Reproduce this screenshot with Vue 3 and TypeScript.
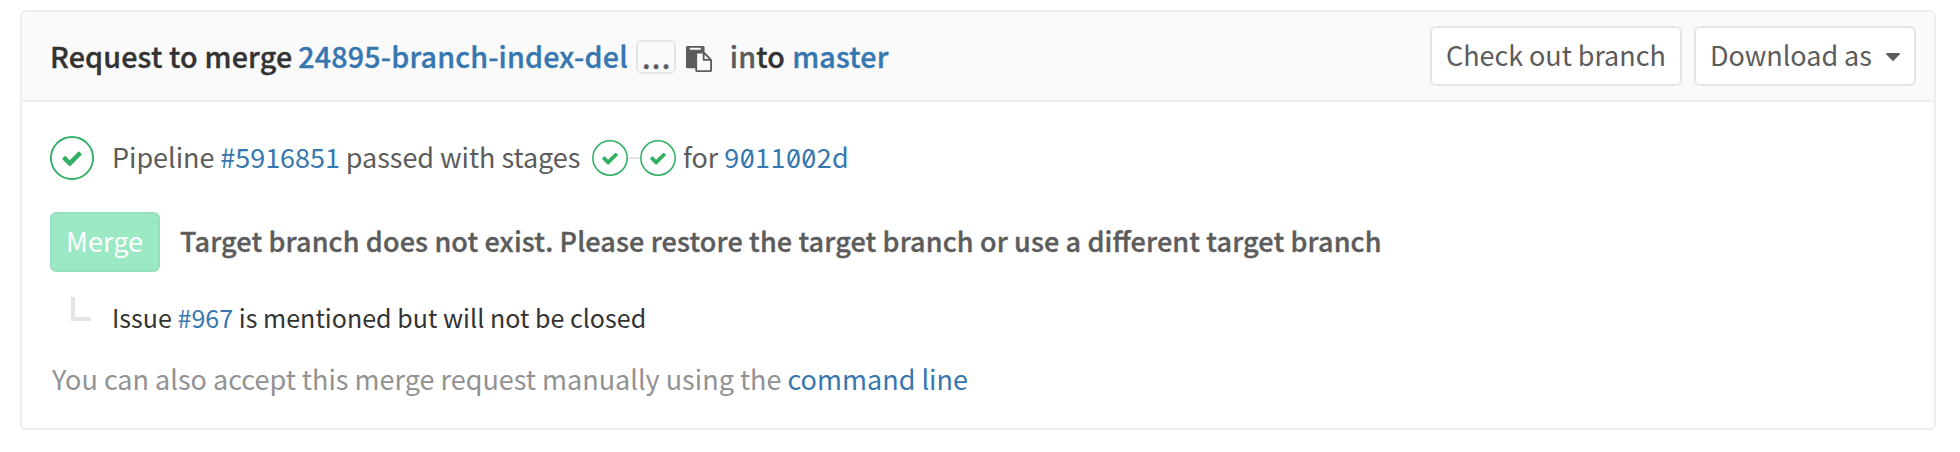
<script setup lang="ts">
const sourceBranch = '24895-branch-index-del'
const targetBranch = 'master'
const pipelineId = 5916851
const commit = [...'9011002d']
const stages = ['build', 'test']
const issueId = 967
const checkPath =
  'M6.278 7.697L5.045 6.464a.296.296 0 0 0-.42-.002l-.613.614a.298.298 0 0 0 .002.42l1.91 1.909a.5.5 0 0 0 .703.005l.265-.265L9.997 6.04a.291.291 0 0 0-.009-.408l-.614-.614a.29.29 0 0 0-.408-.009L6.278 7.697z'
</script>

<template>
  <section class="widget">
    <header class="head">
      <div class="title">
        <span class="lead">Request to merge</span>
        <a class="link source">{{ sourceBranch }}</a>
        <button class="expander" type="button">...</button>
        <svg class="paste" viewBox="0 0 1792 1792">
          <path
            d="M768 1664h896v-640h-416q-40 0-68-28t-28-68v-416h-384v1152zm256-1440v-64q0-13-9.5-22.5t-22.5-9.5h-704q-13 0-22.5 9.5t-9.5 22.5v64q0 13 9.5 22.5t22.5 9.5h704q13 0 22.5-9.5t9.5-22.5zm256 672h299l-299-299v299zm512 128v672q0 40-28 68t-68 28h-960q-40 0-68-28t-28-68v-160h-544q-40 0-68-28t-28-68v-1344q0-40 28-68t68-28h1088q40 0 68 28t28 68v328q21 13 36 28l408 408q28 28 48 76t20 88z"
          />
        </svg>
        <span class="into"><span class="soft">in</span>to</span>
        <a class="link">{{ targetBranch }}</a>
      </div>
      <div class="actions">
        <button class="btn checkout" type="button">Check out branch</button>
        <button class="btn download" type="button">
          Download as
          <svg class="caret" viewBox="0 0 14 8"><path d="M1 0h12q1.4.3.6 1.4L7.8 7.5q-.8.8-1.6 0L.4 1.4Q-.4.3 1 0z" /></svg>
        </button>
      </div>
    </header>

    <div class="body">
      <div class="pipeline">
        <svg class="status" viewBox="0 0 14 14">
          <circle cx="7" cy="7" r="6.7" />
          <path :d="checkPath" />
        </svg>
        <span class="text summary">Pipeline <a class="link">#{{ pipelineId }}</a> passed with stages</span>
        <div class="stages">
          <svg v-for="stage in stages" :key="stage" class="stage" viewBox="0 0 14 14">
            <circle cx="7" cy="7" r="6.68" />
            <path :d="checkPath" />
          </svg>
        </div>
        <span class="text">for</span>
        <a class="link text sha"><span v-for="(ch, i) in commit" :key="i" :class="{ zero: ch === '0' }">{{ ch }}</span></a>
      </div>

      <div class="accept">
        <button class="merge" type="button" disabled>Merge</button>
        <strong class="warning">Target branch does not exist. Please restore the target branch or use a different target branch</strong>
      </div>

      <div class="issue">
        <span class="elbow"></span>
        <span>Issue <a class="link">#{{ issueId }}</a> is mentioned but will not be closed</span>
      </div>

      <p class="hint">You can also accept this merge request manually using the <a class="link">command line</a></p>
    </div>
  </section>
</template>

<style>
body {
  background: #fff;
}
</style>

<style scoped>
.widget,
.widget * {
  box-sizing: border-box;
}
.widget {
  width: 1916px;
  height: 420px;
  margin: 10px 0 0 20px;
  border: 2px solid #eee;
  border-radius: 6px;
  overflow: hidden;
  font: 400 27px/40px "Noto Sans CJK SC", "Open Sans", sans-serif;
  color: #5c5c5c;
  white-space: nowrap;
}
button {
  font: inherit;
  color: inherit;
  margin: 0;
}
.link {
  color: #3777b0;
}
.head {
  display: flex;
  justify-content: space-between;
  align-items: center;
  height: 90px;
  padding: 0 18px 0 28px;
  background: #fafafa;
  border-bottom: 2px solid #eee;
}
.title {
  display: flex;
  align-items: center;
  font-size: 28.65px;
  font-weight: 500;
  letter-spacing: 0.18px;
  -webkit-text-stroke: 0.35px currentColor;
  color: #333;
}
.source {
  margin-left: 6px;
}
.expander {
  width: 40px;
  height: 34px;
  margin: 2px 0 0 8px;
  padding: 0 0 0 2px;
  border: 2px solid #e5e5e5;
  border-radius: 6px;
  background: transparent;
  color: #5c5c5c;
  line-height: 28px;
  letter-spacing: 1.4px;
}
.paste {
  width: 26px;
  height: 26px;
  margin: 5px 0 0 10px;
  fill: #5c5c5c;
}
.into {
  margin: 0 7px 0 18px;
}
.soft {
  color: #5c5c5c;
}
.actions {
  display: flex;
  gap: 12px;
}
.btn {
  display: flex;
  align-items: center;
  justify-content: space-between;
  height: 60px;
  padding: 0 14px 2px;
  border: 2px solid #e5e5e5;
  border-radius: 6px;
  background: #fff;
  letter-spacing: -0.05px;
}
.checkout {
  width: 252px;
}
.download {
  width: 222px;
}
.caret {
  width: 14px;
  height: 8px;
  margin-top: 4px;
  fill: #5c5c5c;
}
.body {
  padding: 34px 28px 0;
}
.pipeline {
  display: flex;
  align-items: center;
  height: 44px;
}
.text {
  padding-bottom: 2px;
}
.summary {
  width: 470px;
  letter-spacing: -0.05px;
}
.status {
  width: 44px;
  height: 44px;
  margin-right: 18px;
}
.status path,
.stage path {
  fill: #31af64;
}
.status circle,
.stage circle {
  fill: #fff;
  stroke: #31af64;
  stroke-width: 0.6;
}
.stages {
  display: flex;
  gap: 12px;
  margin: 0 7px 0 10px;
  background: linear-gradient(#e5e5e5, #e5e5e5) center / 100% 2px no-repeat;
}
.stage {
  width: 36px;
  height: 36px;
}
.sha {
  margin-left: 6px;
  letter-spacing: 0.4px;
}
.zero {
  position: relative;
}
.zero::after {
  content: "";
  position: absolute;
  left: 7px;
  top: 12px;
  width: 1.8px;
  height: 17px;
  background: currentColor;
  transform: rotate(29deg);
}
.accept {
  display: flex;
  align-items: center;
  height: 60px;
  margin-top: 32px;
}
.merge {
  width: 110px;
  height: 60px;
  padding: 0 1px 2px 0;
  border: 2px solid #97e0bd;
  border-radius: 6px;
  background: #9be9c4;
  color: #fff;
}
.warning {
  margin-left: 20px;
  padding-bottom: 2px;
  font-weight: 500;
  letter-spacing: 0.13px;
  font-feature-settings: "liga";
  -webkit-text-stroke: 0.35px currentColor;
}
.issue {
  display: flex;
  height: 40px;
  margin-top: 25px;
  font-size: 25px;
  letter-spacing: 0.03px;
  color: #333;
}
.elbow {
  width: 20px;
  height: 24px;
  margin: 0 21px;
  border: solid #e5e5e5;
  border-width: 0 0 4px 4px;
}
.hint {
  margin: 22px 0 0 2px;
  color: #929292;
}
</style>
